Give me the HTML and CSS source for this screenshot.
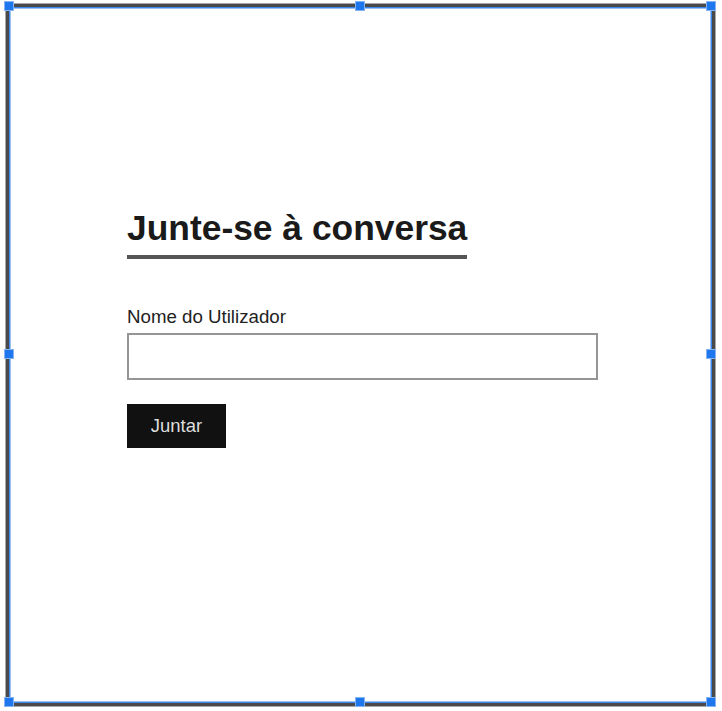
FILE: index.html
```html
<!DOCTYPE html>
<html lang="pt">
<head>
<meta charset="utf-8">
<title>Junte-se à conversa</title>
<link rel="stylesheet" href="styles.css">
</head>
<body>
<main class="page">
  <section class="join">
    <h1 class="join-title">Junte-se à conversa</h1>
    <form class="join-form">
      <label class="join-label" for="username">Nome do Utilizador</label>
      <input class="join-input" id="username" type="text">
      <button class="join-button" type="button">Juntar</button>
    </form>
  </section>
</main>
<div class="selection">
  <span class="handle h-tl"></span>
  <span class="handle h-tm"></span>
  <span class="handle h-tr"></span>
  <span class="handle h-ml"></span>
  <span class="handle h-mr"></span>
  <span class="handle h-bl"></span>
  <span class="handle h-bm"></span>
  <span class="handle h-br"></span>
</div>
</body>
</html>
```
FILE: styles.css
```css
html, body {
  margin: 0;
  padding: 0;
  background: #fff;
}
body {
  width: 722px;
  height: 711px;
  overflow: hidden;
  position: relative;
  font-family: "Liberation Sans", Arial, sans-serif;
  color: #222;
}
.page {
  padding: 207px 0 0 127px;
}
.join {
  display: flex;
  flex-direction: column;
  align-items: flex-start;
}
.join-title {
  margin: 0;
  font-size: 35.4px;
  line-height: 42px;
  font-weight: 700;
  color: #1a1a1a;
  padding-bottom: 6px;
  border-bottom: 4px solid #555;
}
.join-form {
  display: flex;
  flex-direction: column;
  align-items: flex-start;
  margin-top: 47px;
}
.join-label {
  font-size: 18.7px;
  line-height: 22px;
  color: #222;
}
.join-input {
  margin-top: 5px;
  box-sizing: border-box;
  width: 471px;
  height: 47px;
  border: 2px solid #959595;
  background: #fff;
  padding: 0 10px;
}
.join-button {
  margin-top: 24px;
  box-sizing: border-box;
  width: 99px;
  height: 44px;
  border: 0;
  background: #111;
  color: #ddd;
  font-family: "Liberation Sans", Arial, sans-serif;
  font-size: 18.5px;
  padding: 0;
}
.selection {
  position: absolute;
  left: 6px;
  top: 4px;
  width: 709px;
  height: 702px;
  box-sizing: border-box;
  border: 3px solid #4a4a4a;
  outline: 1px solid #a8a8a8;
  box-shadow: inset 0 0 0 1px #3a86ea, inset 0 0 0 2px #9cc0ef;
  pointer-events: none;
}
.handle {
  position: absolute;
  width: 10px;
  height: 10px;
  box-sizing: border-box;
  background: #1f77ee;
  border: 1px solid #86b4f3;
}
.h-tl { left: -5px; top: -6px; }
.h-tm { left: 346px; top: -6px; }
.h-tr { left: 697px; top: -6px; }
.h-ml { left: -5px; top: 342px; }
.h-mr { left: 697px; top: 342px; }
.h-bl { left: -5px; top: 690px; }
.h-bm { left: 346px; top: 690px; }
.h-br { left: 697px; top: 690px; }
```
